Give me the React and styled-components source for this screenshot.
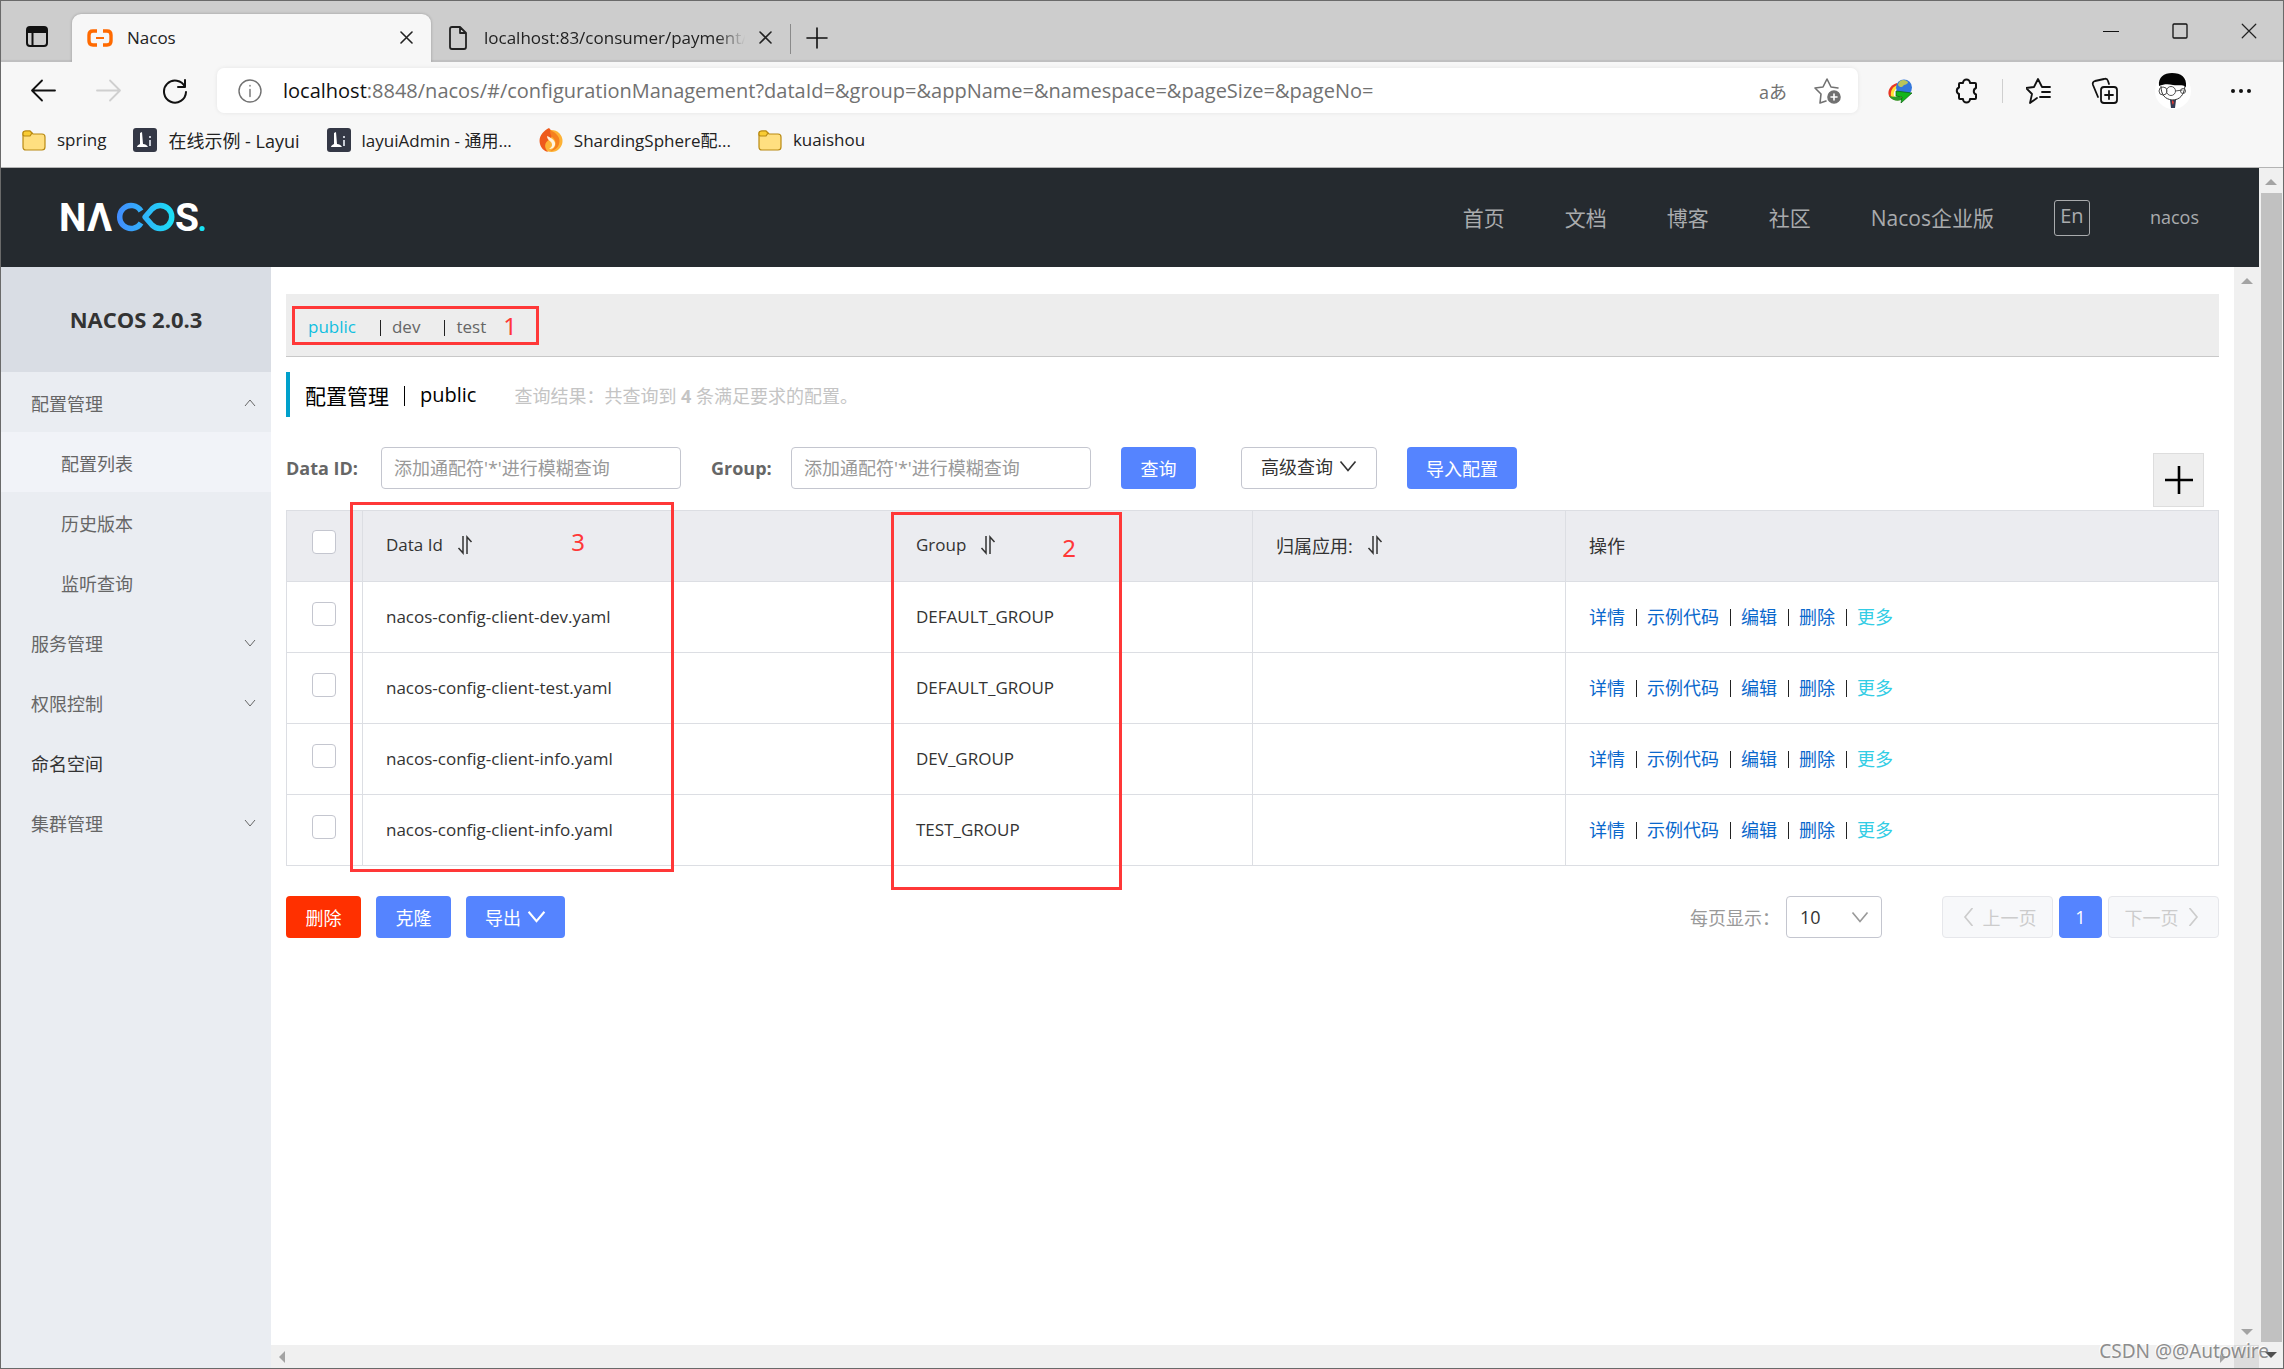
import React from "react";
import styled, { createGlobalStyle, css } from "styled-components";

const uiFont = `"Open Sans", "Noto Sans CJK SC", sans-serif`;

const GlobalStyle = createGlobalStyle`
  *, *::before, *::after { box-sizing: border-box; }
  body { margin: 0; font-family: ${uiFont}; font-size: 18px; color: #333; background: #fff; }
  button, input, select { font: inherit; color: inherit; margin: 0; }
  button { cursor: pointer; }
  a { color: inherit; text-decoration: none; }
  h1, h2, p { margin: 0; padding: 0; font-weight: 400; }
  svg { display: block; flex: none; }
`;

/* ---------- browser frame ---------- */

const BrowserWindow = styled.div`
  position: relative;
  display: flex;
  flex-direction: column;
  min-height: 100vh;
  border: 1px solid #6a6a6a;
  background: #fff;
`;

const TabStrip = styled.div`
  display: flex;
  align-items: stretch;
  height: 61px;
  background: #cdcdcd;
  box-shadow: inset 0 -2px 1px #bfbfc0;
`;

const IconButton = styled.button`
  display: flex;
  align-items: center;
  justify-content: center;
  flex: none;
  width: ${(p) => p.$w || 67}px;
  padding: 0;
  border: 0;
  background: none;
  color: ${(p) => p.$color || "#111"};
`;

const Tab = styled.div`
  display: flex;
  align-items: center;
  width: 359px;
  margin-top: 13px;
  padding: 0 7px 1px 15px;
  font-size: 17px;
  color: #222;
  border-radius: 9px 9px 0 0;
  ${(p) =>
    p.$active &&
    css`
      background: #f7f7f7;
      box-shadow: 0 0 3px rgba(0, 0, 0, 0.25);
      clip-path: inset(-4px -4px 0 -4px);
    `}
`;

const TabTitle = styled.span`
  flex: 1;
  margin-left: 14px;
  white-space: nowrap;
  ${(p) => p.$fade && css`mask-image: linear-gradient(90deg, #000 88%, transparent 99%);`}
`;

const TabRule = styled.span`
  width: 1px;
  height: 30px;
  align-self: center;
  margin-top: 14px;
  background: #8a8a8a;
`;

const NewTab = styled(IconButton)`
  margin-top: 13px;
`;

const WindowControls = styled.div`
  display: flex;
  height: 60px;
  margin-left: auto;
`;

const Toolbar = styled.div`
  background: #f7f7f7;
  border-bottom: 1px solid #b4b4b4;
  padding-bottom: 6px;
`;

const NavRow = styled.div`
  display: flex;
  align-items: center;
  height: 57px;
  padding-left: 9px;
  padding-right: 7px;
`;

const AddressBar = styled.div`
  display: flex;
  align-items: center;
  flex: 1;
  height: 45px;
  margin: 0 8px 0 9px;
  padding-left: 21px;
  border-radius: 7px;
  background: #fff;
  box-shadow: 0 0 4px rgba(0, 0, 0, 0.08);
`;

const Url = styled.span`
  flex: 1;
  margin-left: 21px;
  font-size: 20px;
  color: #717171;
  white-space: nowrap;
  b { font-weight: 400; color: #111; }
`;

const Translate = styled.span`
  margin-right: 11px;
  font-size: 18px;
  color: #717171;
`;

const ToolRule = styled.span`
  width: 1px;
  height: 24px;
  margin: 0 2px;
  background: #cfcfcf;
`;

const Bookmarks = styled.nav`
  display: flex;
  align-items: center;
  gap: 27px;
  height: 42px;
  padding: 0 0 1px 21px;
`;

const Bookmark = styled.a`
  display: flex;
  align-items: center;
  gap: 11px;
  font-size: ${(p) => (p.$large ? 18 : 17)}px;
  color: #222;
  white-space: nowrap;
`;

/* ---------- scrollbars ---------- */

const VScroll = styled.div`
  display: flex;
  flex-direction: column;
  align-items: center;
  justify-content: space-between;
  flex: none;
  width: ${(p) => p.$w}px;
  padding: 11px 1px 10px;
  background: #f0f0f0;
`;

const Thumb = styled.div`
  flex: 1;
  align-self: stretch;
  margin: 8px 0 10px 1px;
  background: #c1c1c1;
`;

const HScroll = styled.div`
  display: flex;
  align-items: center;
  justify-content: space-between;
  height: 23px;
  padding: 0 8px;
  background: #f0f0f0;
`;

const BottomBar = styled.div`
  display: grid;
  grid-template-columns: 1fr 25px;
`;

const Corner = styled.div`
  background: #dcdcdc;
`;

/* ---------- nacos layout ---------- */

const Page = styled.div`
  display: flex;
  flex: 1;
`;

const Site = styled.div`
  display: flex;
  flex-direction: column;
  flex: 1;
  min-width: 0;
`;

const SiteHeader = styled.header`
  display: flex;
  align-items: center;
  justify-content: space-between;
  height: 99px;
  padding: 0 60px 0 57px;
  background: #252a2f;
`;

const SiteNav = styled.nav`
  display: flex;
  align-items: center;
  gap: 60px;
  font-size: 21px;
  color: #a9abad;
  a { padding-bottom: 2px; }
`;

const LangButton = styled.button`
  width: 36px;
  height: 36px;
  padding: 0 0 4px;
  border: 1px solid #a9abad;
  border-radius: 3px;
  background: none;
  font-size: 20px;
  line-height: 28px;
`;

const UserLink = styled.a`
  font-size: 18px;
`;

const Body = styled.div`
  display: flex;
  flex: 1;
`;

const Sidebar = styled.aside`
  flex: none;
  width: 270px;
  background: #eaedf2;
`;

const Product = styled.h1`
  height: 105px;
  line-height: 105px;
  text-align: center;
  font-size: 22px;
  font-weight: 700;
  background: #d9dde4;
`;

const menuItem = css`
  display: flex;
  align-items: center;
  justify-content: space-between;
  width: 100%;
  height: 60px;
  padding: 1px 15px 0 30px;
  font-size: 18px;
  color: #666;
`;

const MenuGroup = styled.button`
  ${menuItem}
  border: 0;
  background: none;
  text-align: left;
`;

const MenuLink = styled.a`
  ${menuItem}
  ${(p) => p.$child && css`padding-left: 60px;`}
  ${(p) => p.$dark && css`color: #333;`}
  ${(p) => p.$active && css`background: #f1f3f8;`}
`;

const Content = styled.div`
  display: flex;
  flex-direction: column;
  flex: 1;
  min-width: 0;
`;

const ContentRow = styled.div`
  display: flex;
  flex: 1;
`;

const Main = styled.main`
  flex: 1;
  min-width: 0;
  padding: 27px 15px 30px;
`;

const Namespaces = styled.nav`
  position: relative;
  display: flex;
  align-items: center;
  height: 63px;
  padding: 3px 0 0 22px;
  border-bottom: 1px solid #c8c8c8;
  background: #ededed;
  font-size: 17px;
  color: #666;
`;

const Namespace = styled.a`
  color: ${(p) => (p.$active ? "#10bfe0" : "#666")};
`;

const NsRule = styled.span`
  width: 1px;
  height: 16px;
  margin: 3px 11px 0 24px;
  background: #222;
`;

const Heading = styled.div`
  display: flex;
  align-items: center;
  height: 45px;
  margin-top: 15px;
  padding: 0 0 0 15px;
  border-left: 4px solid #00a0cb;
  color: #000;
`;

const Title = styled.h2`
  display: flex;
  align-items: center;
  gap: 15px;
  font-size: 21px;
  small { font-size: 20px; }
`;

const TitleRule = styled.span`
  width: 1px;
  height: 20px;
  margin-top: 2px;
  background: #000;
`;

const ResultNote = styled.p`
  margin-left: 38px;
  font-size: 18px;
  color: #c4c4c4;
`;

const Filters = styled.form`
  display: flex;
  align-items: flex-start;
  height: 63px;
  margin-top: 30px;
`;

const FilterLabel = styled.label`
  flex: none;
  width: ${(p) => p.$w}px;
  line-height: 42px;
  font-size: 18px;
  font-weight: 700;
  color: #666;
`;

const TextInput = styled.input`
  width: 300px;
  height: 42px;
  margin-right: 30px;
  padding: 0 12px;
  border: 1px solid #c4c6cf;
  border-radius: 4px;
  background: #fff;
  &::placeholder { color: #999; opacity: 1; }
`;

const Button = styled.button`
  display: inline-flex;
  align-items: center;
  justify-content: center;
  gap: 6px;
  height: 42px;
  min-width: 75px;
  padding: 0 18px 1px;
  border: 1px solid transparent;
  border-radius: 4px;
  white-space: nowrap;
  color: #fff;
  background: #5584ff;
  ${(p) => p.$kind === "danger" && css`background: #ff3000;`}
  ${(p) =>
    p.$kind === "plain" &&
    css`
      min-width: 136px;
      margin: 0 30px 0 45px;
      padding-bottom: 5px;
      color: #333;
      background: #fff;
      border-color: #c4c6cf;
    `}
`;

const AddButton = styled.button`
  display: flex;
  align-items: center;
  justify-content: center;
  width: 51px;
  height: 54px;
  margin: 6px 15px 0 auto;
  padding: 0;
  border: 1px solid #ddd;
  background: #eee;
`;

const TableWrap = styled.div`
  position: relative;
`;

const Table = styled.table`
  width: 100%;
  table-layout: fixed;
  border-collapse: collapse;
  font-size: 17px;
`;

const HeadCell = styled.th`
  height: 71px;
  width: ${(p) => (p.$w ? p.$w + "px" : "auto")};
  padding: 0 23px 3px;
  border: 1px solid #dcdee3;
  background: #ebecf0;
  font-weight: 400;
  font-size: ${(p) => (p.$large ? 18 : 17)}px;
  text-align: left;
`;

const Cell = styled.td`
  height: 71px;
  padding: 0 23px 2px;
  border: 1px solid #dcdee3;
`;

const HeadLabel = styled.span`
  display: flex;
  align-items: center;
  gap: 14px;
`;

const Check = styled.input.attrs({ type: "checkbox" })`
  appearance: none;
  display: block;
  width: 24px;
  height: 24px;
  margin: 0 0 5px 2px;
  border: 1px solid #c4c6cf;
  border-radius: 4px;
  background: #fff;
`;

const Actions = styled.div`
  display: flex;
  align-items: center;
  font-size: 18px;
  color: #0a68cc;
`;

const ActionRule = styled.span`
  width: 1px;
  height: 17px;
  margin: 2px 10px 0 11px;
  background: #222;
`;

const MoreLink = styled.a`
  color: #33cde5;
`;

const Footer = styled.div`
  display: flex;
  align-items: center;
  margin-top: 30px;
`;

const BulkButtons = styled.div`
  display: flex;
  gap: 15px;
`;

const Pager = styled.div`
  display: flex;
  align-items: center;
  gap: 6px;
  margin-left: auto;
`;

const SizeLabel = styled.label`
  color: #999;
`;

const SizeSelect = styled.span`
  position: relative;
  margin-right: 54px;
  select {
    appearance: none;
    display: block;
    width: 96px;
    height: 42px;
    padding: 0 13px;
    border: 1px solid #c4c6cf;
    border-radius: 4px;
    background: #fff;
  }
  svg {
    position: absolute;
    top: 12px;
    right: 13px;
    pointer-events: none;
  }
`;

const PageButton = styled.button`
  display: flex;
  align-items: center;
  justify-content: center;
  gap: 6px;
  width: ${(p) => (p.$current ? 43 : 111)}px;
  height: 42px;
  padding: 0;
  border: 1px solid #e6e7eb;
  border-radius: 4px;
  background: #f7f8fa;
  color: #ccc;
  ${(p) =>
    p.$current &&
    css`
      background: #5584ff;
      border-color: #5584ff;
      color: #fff;
    `}
`;

/* ---------- red call-outs ---------- */

const Callout = styled.div`
  position: absolute;
  top: ${(p) => p.$top}px;
  left: ${(p) => p.$left}px;
  width: ${(p) => p.$w}px;
  height: ${(p) => p.$h}px;
  padding: ${(p) => p.$pad};
  border: 3px solid #ff3838;
  color: #ff3838;
  font-family: "Noto Sans", sans-serif;
  font-size: 24px;
  line-height: 33px;
  text-align: right;
  pointer-events: none;
`;

const Watermark = styled.div`
  position: absolute;
  right: 14px;
  bottom: 4px;
  font-family: "Noto Sans", sans-serif;
  font-size: 19px;
  color: #8d8d8d;
  text-shadow: -1px -1px 0 #fff;
`;

/* ---------- icons ---------- */

const Stroke = ({ size = 24, w = 1.5, vb, children, ...rest }) => (
  <svg
    width={size}
    height={size}
    viewBox={vb || `0 0 ${size} ${size}`}
    fill="none"
    stroke="currentColor"
    strokeWidth={w}
    strokeLinecap="round"
    strokeLinejoin="round"
    aria-hidden="true"
    {...rest}
  >
    {children}
  </svg>
);

const Chevron = ({ dir = "down", size = 12, color, w = 1.3 }) => {
  const d = { down: "M1 3l5 6 5-6", up: "M1 9l5-6 5 6", left: "M9 0L4 6l5 6", right: "M3 0l5 6-5 6" }[dir];
  return (
    <svg width={size} height={size} viewBox="0 0 12 12" fill="none" stroke={color || "currentColor"} strokeWidth={w} aria-hidden="true">
      <path d={d} />
    </svg>
  );
};

const Arrow = ({ dir, color = "#a3a3a3" }) => {
  const d = { up: "M0 6L6 0l6 6z", down: "M0 0h12L6 6z", left: "M6 0v12L0 6z", right: "M0 0l6 6-6 6z" }[dir];
  const flat = dir === "up" || dir === "down";
  return (
    <svg width={flat ? 12 : 6} height={flat ? 6 : 12} viewBox={flat ? "0 0 12 6" : "0 0 6 12"} fill={color} aria-hidden="true">
      <path d={d} />
    </svg>
  );
};

const Cross = ({ size = 13, w = 1.6, color = "#222" }) => (
  <Stroke size={size} w={w} vb="0 0 13 13" color={color}>
    <path d="M1 1l11 11M12 1L1 12" />
  </Stroke>
);

const SortIcon = () => (
  <svg width="16" height="20" viewBox="0 0 16 20" fill="none" stroke="#333" strokeWidth="1.500" aria-hidden="true">
    <path d="M6 1v17L1.500 13M10 19V2l4.500 5" />
  </svg>
);

const Folder = () => (
  <svg width="24" height="24" viewBox="0 0 24 24" aria-hidden="true">
    <path d="M1 6q0-3 3-3h4l3 3h9q3 0 3 3v10q0 3-3 3H4q-3 0-3-3z" fill="#ffdf80" stroke="#b98a12" strokeWidth="1.200" />
    <path d="M1 7V5q0-2 3-2h4l2 2-2 3H2z" fill="#f9cc33" stroke="#b98a12" strokeWidth="1.200" />
  </svg>
);

const LayuiIcon = () => (
  <svg width="24" height="24" viewBox="0 0 24 24" aria-hidden="true">
    <rect width="24" height="24" rx="3" fill="#343846" />
    <path d="M7 5l2-1 1 12c2 0 4 1 5 3H4c0-1 1-2 3-3z" fill="#fff" />
    <path d="M16 12h2v6h-2zM16 8h2v2h-2z" fill="#c8ccd6" />
  </svg>
);

const ShardingIcon = () => (
  <svg width="24" height="24" viewBox="0 0 24 24" aria-hidden="true">
    <circle cx="12.500" cy="13" r="11" fill="#fdb235" />
    <path d="M10 0C4 3-1 9 1 16c1 4 4 7 8 8-5-6-3-10 2-13 3-3 3-7-1-11z" fill="#ee5a1c" />
    <path d="M11 2c7 3 11 8 9 14-1 4-5 7-9 7 6-3 7-8 4-12-3-3-4-5-4-9z" fill="#f5801f" />
    <path d="M8 8c5 2 9 5 8 9-1 3-3 4-6 4 3-2 4-4 2-7-2-2-4-3-4-6z" fill="#fff3df" />
  </svg>
);

const NacosFavicon = () => (
  <svg width="26" height="18" viewBox="0 0 26 18" fill="none" stroke="#ff6a00" strokeWidth="3.400" aria-hidden="true">
    <path d="M10 2H6Q2 2 2 6v6q0 4 4 4h4M16 2h4q4 0 4 4v6q0 4-4 4h-4" />
    <path d="M9 9h8" strokeWidth="2" />
  </svg>
);

const DownloaderIcon = () => (
  <svg width="26" height="24" viewBox="0 0 26 24" fill="none" aria-hidden="true">
    <path d="M10 4C3 6 0 12 2 17c3 5 10 5 13 3z" fill="#e93524" />
    <path d="M11 6c-5 1-8 6-7 11 3 4 7 4 10 2z" fill="#ffe234" />
    <path d="M11 9c-3 1-5 4-4 8 2 2 5 2 7 1z" fill="#f7f7f7" />
    <path d="M2 17c3 5 10 6 14 3l-4-3c-3 1-7 1-10 0z" fill="#2a9d28" />
    <circle cx="17" cy="8.500" r="8" fill="#3377dc" />
    <path d="M13 2c3-2 6-1 8 1 0 3-4 2-5 4s-4 1-5-1c0-1 1-3 2-4z" fill="#b9c45a" />
    <path d="M9 12l16 2-11 10 1-6-6-1z" fill="#15b51c" stroke="#08630c" strokeWidth=".7" />
  </svg>
);

const Avatar = () => (
  <svg width="38" height="38" viewBox="0 0 38 38" aria-hidden="true">
    <circle cx="19" cy="19" r="18" fill="#fff" />
    <path d="M7 14c0 9 4 13 11 14 8 0 12-5 13-14" fill="#fff" stroke="#333" strokeWidth="1" />
    <path d="M5 14C4 5 10 1 18 1c9 0 15 4 14 14-4-3-8-1-13-2s-9-1-14 1z" fill="#050505" />
    <g fill="none" stroke="#555" strokeWidth="1">
      <circle cx="9" cy="19" r="4" />
      <circle cx="17" cy="19" r="4.500" />
      <path d="M21.500 19l7-1" />
      <circle cx="29" cy="19" r="2.500" />
    </g>
    <path d="M16 28h6l-1 8h-4z" fill="#333b52" />
    <path d="M18 28l2 2-1 3-1-2z" fill="#dc3a35" />
  </svg>
);

const NacosLogo = () => (
  <svg width="152" height="56" viewBox="-3 -12 152 56" role="img" aria-label="NACOS.">
    <defs>
      <linearGradient id="loop" gradientUnits="userSpaceOnUse" x1="54" y1="0" x2="115" y2="0">
        <stop offset="0" stopColor="#4489ff" />
        <stop offset="1" stopColor="#19e2f4" />
      </linearGradient>
    </defs>
    <g fill="#fff" fontFamily="Roboto, sans-serif" fontWeight="700" fontSize="39">
      <text x="-2" y="29">N</text>
      <text x="26" y="29">Λ</text>
      <text x="114" y="29">S</text>
    </g>
    <g fill="none" stroke="url(#loop)" strokeWidth="5.500">
      <path d="M80 9A11.500 11.500 0 1 0 80 21" />
      <path d="M84 15L91 7A11.500 11.500 0 1 1 91 23Z" strokeLinejoin="round" />
    </g>
    <circle cx="141" cy="26.500" r="2.600" fill="#19e2f4" />
  </svg>
);

/* ---------- data ---------- */

const rows = [
  ["nacos-config-client-dev.yaml", "DEFAULT_GROUP"],
  ["nacos-config-client-test.yaml", "DEFAULT_GROUP"],
  ["nacos-config-client-info.yaml", "DEV_GROUP"],
  ["nacos-config-client-info.yaml", "TEST_GROUP"],
];

const placeholder = "添加通配符'*'进行模糊查询";

/* ---------- sections ---------- */

const Browser = () => (
  <>
    <TabStrip>
      <IconButton $w={71} aria-label="Tab actions">
        <Stroke size={24} w={2} vb="0 -4 24 24" overflow="visible">
          <rect x="2" y="3" width="20" height="19" rx="3" />
          <path d="M3 5h18v3H3zM7.500 8v14" fill="currentColor" />
        </Stroke>
      </IconButton>
      <Tab $active>
        <NacosFavicon />
        <TabTitle>Nacos</TabTitle>
        <IconButton $w={36} aria-label="Close tab"><Cross /></IconButton>
      </Tab>
      <Tab>
        <Stroke size={24} w={1.8}>
          <path d="M4 3q0-2 2-2h8l6 6v14q0 2-2 2H6q-2 0-2-2zM14 1v6h6" />
        </Stroke>
        <TabTitle $fade>localhost:83/consumer/payment/</TabTitle>
        <IconButton $w={36} aria-label="Close tab"><Cross /></IconButton>
      </Tab>
      <TabRule />
      <NewTab $w={52} aria-label="New tab">
        <Stroke size={22} w={1.6}><path d="M11 1v20M1 11h20" /></Stroke>
      </NewTab>
      <WindowControls>
        <IconButton $w={69} aria-label="Minimize">
          <Stroke size={16} w={1.2}><path d="M0 8.500h16" /></Stroke>
        </IconButton>
        <IconButton $w={69} aria-label="Maximize">
          <Stroke size={16} w={1.3}><rect x="1" y="1" width="14" height="14" rx="1" /></Stroke>
        </IconButton>
        <IconButton $w={69} aria-label="Close"><Cross size={16} w={1} /></IconButton>
      </WindowControls>
    </TabStrip>
    <Toolbar>
      <NavRow>
        <IconButton $w={66} aria-label="Back">
          <Stroke size={26} w={1.8}><path d="M25 12.500H2M12 2.500l-10 10 10 10" /></Stroke>
        </IconButton>
        <IconButton $w={66} $color="#cfcfcf" aria-label="Forward">
          <Stroke size={26} w={1.8}><path d="M1 12.500h23M14 2.500l10 10-10 10" /></Stroke>
        </IconButton>
        <IconButton $w={66} aria-label="Refresh">
          <Stroke size={26} w={2}><path d="M23 9A11 11 0 1 0 24 14M23 2v7h-7" /></Stroke>
        </IconButton>
        <AddressBar>
          <Stroke size={24} w={1.4} color="#717171">
            <circle cx="12" cy="12" r="11" />
            <path d="M12 10.500v7M12 6.500v.6" />
          </Stroke>
          <Url><b>localhost</b>:8848/nacos/#/configurationManagement?dataId=&amp;group=&amp;appName=&amp;namespace=&amp;pageSize=&amp;pageNo=</Url>
          <Translate>aあ</Translate>
          <IconButton $w={60} $color="#717171" aria-label="Add to favorites">
            <Stroke size={28} w={1.6}>
              <path d="M12 24l-6 2 1-9-6-6 8-1 4-8 4 8 7 1" />
              <circle cx="20" cy="20" r="6" fill="currentColor" />
              <path d="M20 17v6M17 20h6" stroke="#fff" />
            </Stroke>
          </IconButton>
        </AddressBar>
        <IconButton aria-label="Download manager"><DownloaderIcon /></IconButton>
        <IconButton aria-label="Extensions">
          <Stroke size={26} w={2} vb="1 0 26 26">
            <path d="M7 5h3a3.500 3.500 0 0 1 7 0h5q1 0 1 1v4a3.500 3.500 0 0 0 0 6.500V20q0 1-1 1h-5a3.500 3.500 0 0 1-7 0H7q-1 0-1-1v-4a3.500 3.500 0 0 1 0-6.500V6q0-1 1-1z" />
          </Stroke>
        </IconButton>
        <ToolRule />
        <IconButton aria-label="Favorites">
          <Stroke size={26} w={1.8} vb="1 0 26 26">
            <path d="M12 20l-7 5 2-9-6-6 8-1 4-8 4 8h8M17 14h8M15 19h10" />
          </Stroke>
        </IconButton>
        <IconButton aria-label="Collections">
          <Stroke size={26} w={1.8} vb="1 0 26 26" overflow="visible">
            <rect x="9" y="9" width="16" height="16" rx="3" />
            <path d="M17 13v8M13 17h8M6 19L1 7q-1-3 2-4l9-2q3-1 4 2l1 3" />
          </Stroke>
        </IconButton>
        <IconButton aria-label="Profile"><Avatar /></IconButton>
        <IconButton $w={70} aria-label="Settings and more">
          <svg width="22" height="6" viewBox="0 0 22 6" fill="#111" aria-hidden="true">
            <circle cx="3" cy="3" r="2" /><circle cx="11" cy="3" r="2" /><circle cx="19" cy="3" r="2" />
          </svg>
        </IconButton>
      </NavRow>
      <Bookmarks>
        <Bookmark href="#"><Folder />spring</Bookmark>
        <Bookmark href="#" $large><LayuiIcon />在线示例 - Layui</Bookmark>
        <Bookmark href="#"><LayuiIcon />layuiAdmin - 通用...</Bookmark>
        <Bookmark href="#"><ShardingIcon />ShardingSphere配...</Bookmark>
        <Bookmark href="#"><Folder />kuaishou</Bookmark>
      </Bookmarks>
    </Toolbar>
  </>
);

const SideMenu = () => (
  <Sidebar>
    <Product>NACOS 2.0.3</Product>
    <MenuGroup>配置管理<Chevron dir="up" w={1} /></MenuGroup>
    <MenuLink href="#" $child $active>配置列表</MenuLink>
    <MenuLink href="#" $child>历史版本</MenuLink>
    <MenuLink href="#" $child>监听查询</MenuLink>
    <MenuGroup>服务管理<Chevron w={1} /></MenuGroup>
    <MenuGroup>权限控制<Chevron w={1} /></MenuGroup>
    <MenuLink href="#" $dark>命名空间</MenuLink>
    <MenuGroup>集群管理<Chevron w={1} /></MenuGroup>
  </Sidebar>
);

const ConfigTable = () => (
  <TableWrap>
    <Table>
      <thead>
        <tr>
          <HeadCell $w={76}><Check aria-label="全选" /></HeadCell>
          <HeadCell $w={530}><HeadLabel>Data Id<SortIcon /></HeadLabel></HeadCell>
          <HeadCell $w={360}><HeadLabel>Group<SortIcon /></HeadLabel></HeadCell>
          <HeadCell $w={313} $large><HeadLabel>归属应用:<SortIcon /></HeadLabel></HeadCell>
          <HeadCell $large>操作</HeadCell>
        </tr>
      </thead>
      <tbody>
        {rows.map(([id, group], i) => (
          <tr key={i}>
            <Cell><Check aria-label={id} /></Cell>
            <Cell>{id}</Cell>
            <Cell>{group}</Cell>
            <Cell />
            <Cell>
              <Actions>
                <a href="#">详情</a><ActionRule />
                <a href="#">示例代码</a><ActionRule />
                <a href="#">编辑</a><ActionRule />
                <a href="#">删除</a><ActionRule />
                <MoreLink href="#">更多</MoreLink>
              </Actions>
            </Cell>
          </tr>
        ))}
      </tbody>
    </Table>
    <Callout $top={-8} $left={64} $w={324} $h={370} $pad="20px 86px 0 0">3</Callout>
    <Callout $top={2} $left={605} $w={231} $h={378} $pad="16px 43px 0 0">2</Callout>
  </TableWrap>
);

export default function App() {
  return (
    <BrowserWindow>
      <GlobalStyle />
      <Browser />
      <Page>
        <Site>
          <SiteHeader>
            <NacosLogo />
            <SiteNav>
              <a href="#">首页</a>
              <a href="#">文档</a>
              <a href="#">博客</a>
              <a href="#">社区</a>
              <a href="#">Nacos企业版</a>
              <LangButton>En</LangButton>
              <UserLink href="#">nacos</UserLink>
            </SiteNav>
          </SiteHeader>
          <Body>
            <SideMenu />
            <Content>
              <ContentRow>
                <Main>
                  <Namespaces>
                    <Namespace href="#" $active>public</Namespace>
                    <NsRule />
                    <Namespace href="#">dev</Namespace>
                    <NsRule />
                    <Namespace href="#">test</Namespace>
                    <Callout $top={12} $left={6} $w={247} $h={39} $pad="0 19px 0 0">1</Callout>
                  </Namespaces>
                  <Heading>
                    <Title>配置管理<TitleRule /><small>public</small></Title>
                    <ResultNote>查询结果：共查询到 <b>4</b> 条满足要求的配置。</ResultNote>
                  </Heading>
                  <Filters onSubmit={(e) => e.preventDefault()}>
                    <FilterLabel $w={95} htmlFor="dataId">Data ID:</FilterLabel>
                    <TextInput id="dataId" placeholder={placeholder} />
                    <FilterLabel $w={80} htmlFor="group">Group:</FilterLabel>
                    <TextInput id="group" placeholder={placeholder} />
                    <Button type="submit">查询</Button>
                    <Button type="button" $kind="plain">高级查询<Chevron size={18} w={1.1} /></Button>
                    <Button type="button">导入配置</Button>
                    <AddButton type="button" aria-label="新建配置">
                      <Stroke size={30} w={2.6} color="#000"><path d="M15 1v28M1 15h28" strokeLinecap="butt" /></Stroke>
                    </AddButton>
                  </Filters>
                  <ConfigTable />
                  <Footer>
                    <BulkButtons>
                      <Button $kind="danger">删除</Button>
                      <Button>克隆</Button>
                      <Button>导出<Chevron size={19} /></Button>
                    </BulkButtons>
                    <Pager>
                      <SizeLabel htmlFor="pageSize">每页显示：</SizeLabel>
                      <SizeSelect>
                        <select id="pageSize" defaultValue="10"><option>10</option></select>
                        <Chevron size={18} color="#999" w={1.1} />
                      </SizeSelect>
                      <PageButton><Chevron dir="left" size={18} w={1.1} />上一页</PageButton>
                      <PageButton $current>1</PageButton>
                      <PageButton>下一页<Chevron dir="right" size={18} w={1.1} /></PageButton>
                    </Pager>
                  </Footer>
                </Main>
                <VScroll $w={25}><Arrow dir="up" /><Arrow dir="down" /></VScroll>
              </ContentRow>
              <BottomBar>
                <HScroll><Arrow dir="left" /><Arrow dir="right" /></HScroll>
                <Corner />
              </BottomBar>
            </Content>
          </Body>
        </Site>
        <VScroll $w={24}>
          <Arrow dir="up" />
          <Thumb />
          <Arrow dir="down" color="#505050" />
        </VScroll>
      </Page>
      <Watermark>CSDN @@Autowire</Watermark>
    </BrowserWindow>
  );
}
